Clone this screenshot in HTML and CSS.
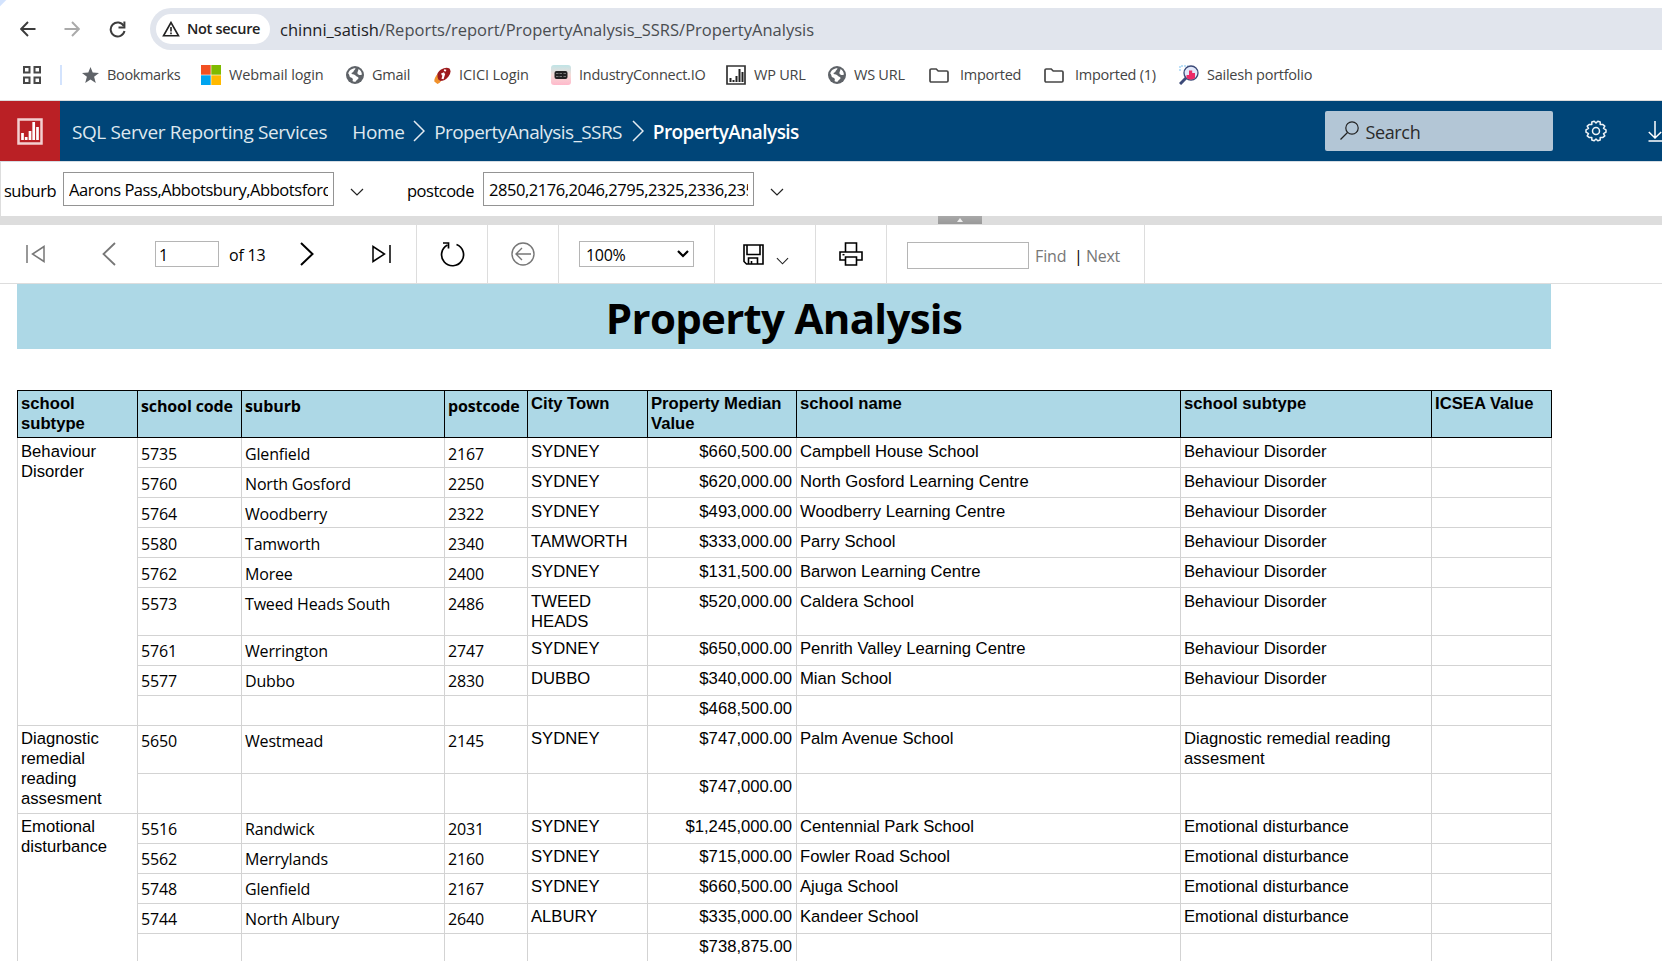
FILE: index.html
```
<!DOCTYPE html>
<html lang="en">
<head>
<meta charset="utf-8">
<title>PropertyAnalysis</title>
<link rel="stylesheet" href="styles.css">
</head>
<body>
<svg width="0" height="0" class="defs">
  <symbol id="globe" viewBox="0 0 18 18"><circle cx="9" cy="9" r="9" fill="#5f6368"/><path d="M2.200 7.500C3 4.500 5.500 2.200 9.500 2.200 9.500 4 7.500 4 7.500 5.500 7.500 6.500 5.500 6.300 5.500 7.500 5.500 8.500 8.500 8 9.500 9.500 10.300 11 12.500 10.500 12.500 12 12.500 13.500 10.500 13.500 9.500 15.800 8 16 7 15.500 6.500 15 7.500 13 6.500 12 5 11.500 3 11 4 9 2.200 7.500zM12.500 3c2 1.200 3.300 3 3.400 5.500-1.500 1-3.900.5-4.400-1C11 6 12.500 5 12.500 3z" fill="#fff"/></symbol>
  <symbol id="folder" viewBox="0 0 20 15"><path d="M1 3.500V2.200Q1 1 2.300 1h4.900l2 2h8.600Q19 3 19 4.200v8.600q0 1.200-1.200 1.200H2.200Q1 14 1 12.800z" fill="none" stroke="#474747" stroke-width="1.700"/></symbol>
  <symbol id="down" viewBox="0 0 14 8"><path d="M1 1l6 6 6-6" fill="none" stroke="#222" stroke-width="1.200"/></symbol>
  <symbol id="crumb" viewBox="0 0 12 22"><path d="M1 1l10 10L1 21" fill="none" stroke="#e4ebf1" stroke-width="1.500"/></symbol>
</svg>

<header class="browser">
  <div class="nav">
    <svg class="back" width="16" height="16" viewBox="0 0 16 16"><path d="M15.500 8H1.500M8 1L1.200 8 8 15" fill="none" stroke="#3c3c3c" stroke-width="1.900"/></svg>
    <svg class="forward" width="16" height="16" viewBox="0 0 16 16"><path d="M.5 8h14M8 1l6.800 7L8 15" fill="none" stroke="#aaa" stroke-width="1.900"/></svg>
    <svg class="reload" width="17" height="17" viewBox="0 0 17 17"><path d="M14.800 5A7 7 0 1 0 15.500 10" fill="none" stroke="#3c3c3c" stroke-width="2"/><path d="M15.400.5v6H9.500" fill="none" stroke="#3c3c3c" stroke-width="2"/></svg>
    <div class="address">
      <div class="secure"><svg width="18" height="16" viewBox="0 0 18 16"><path d="M9 1.500L1.500 14.800h15z" fill="none" stroke="#222" stroke-width="1.600"/><path d="M9 6v4.500M9 11.500v1.700" stroke="#222" stroke-width="1.600"/></svg><span>Not secure</span></div>
      <span class="url"><b>chinni_satish</b>/Reports/report/PropertyAnalysis_SSRS/PropertyAnalysis</span>
    </div>
  </div>
  <div class="bookmarks">
    <svg class="apps" width="18" height="18" viewBox="0 0 18 18"><path d="M1 1h5.500v5.500H1zM11.500 1H17v5.500h-5.500zM1 11.500h5.500V17H1zM11.500 11.500H17V17h-5.500z" fill="none" stroke="#474747" stroke-width="2"/></svg>
    <i class="divider"></i>
    <a class="m1"><svg width="17" height="16" viewBox="0 0 17 16"><path d="M8.500 0l2.200 5.500 6.300.4-4.900 3.800 1.700 6.300-5.300-3.500L3.200 16l1.700-6.300L0 5.900l6.300-.4z" fill="#5f6368"/></svg><span>Bookmarks</span></a>
    <a class="m2"><svg width="20" height="20" viewBox="0 0 20 20"><path d="M0 0h9.700v9.700H0z" fill="#f25022"/><path d="M10.300 0H20v9.700h-9.700z" fill="#7fba00"/><path d="M0 10.300h9.700V20H0z" fill="#00a4ef"/><path d="M10.300 10.300H20V20h-9.700z" fill="#ffb900"/></svg><span>Webmail login</span></a>
    <a class="m3"><svg width="18" height="18"><use href="#globe"/></svg><span>Gmail</span></a>
    <a class="m4"><svg width="17" height="18" viewBox="0 0 17 18"><path d="M3 12Q2 7 7 3.500 12 .5 15.500 2.500 18 6 14.500 10.500 11 15 6 15 3.500 14.500 3 12z" fill="#9d1b1e"/><path d="M3.500 8Q0 12 .3 15.500L3.500 18q2.500-1 3.500-2.800Q3 14.500 3.500 8z" fill="#f0912b"/><path d="M10.200 7.500L8.500 13M11.300 3.500l-.5 1.800M7.500 8.500l3-1.300" stroke="#fff" stroke-width="2.200"/></svg><span>ICICI Login</span></a>
    <a class="m5"><svg width="20" height="20" viewBox="0 0 20 20"><defs><linearGradient id="ic" x1="0" y1="0" x2="0" y2="1"><stop offset="0" stop-color="#bfe4e6"/><stop offset=".5" stop-color="#f5dcd8"/><stop offset="1" stop-color="#ffb9cb"/></linearGradient></defs><rect width="20" height="20" rx="3" fill="url(#ic)"/><rect x="3.500" y="6" width="13" height="8" rx="2" fill="#222"/><path d="M5 8.500h2.500m1 0H11m1.500 0H15M5 11.500h2.500m1 0H11m1.500 0H15" stroke="#777"/></svg><span>IndustryConnect.IO</span></a>
    <a class="m6"><svg width="20" height="20" viewBox="0 0 20 20"><path d="M1 1h18v18H1z" fill="#fff" stroke="#333" stroke-width="1.700"/><path d="M4.500 17v-4M7.500 17v-2M10.500 17v-6M13.500 17V4M16.500 17V7" stroke="#222" stroke-width="2"/></svg><span>WP URL</span></a>
    <a class="m7"><svg width="18" height="18"><use href="#globe"/></svg><span>WS URL</span></a>
    <a class="m8"><svg width="20" height="15"><use href="#folder"/></svg><span>Imported</span></a>
    <a class="m9"><svg width="20" height="15"><use href="#folder"/></svg><span>Imported (1)</span></a>
    <a class="m10"><svg width="20" height="20" viewBox="0 0 20 20"><path d="M1 6V1h8" fill="none" stroke="#a6d5f5" stroke-width="1.500" stroke-dasharray="2 1"/><circle cx="12" cy="8" r="7" fill="#e2e8fa" stroke="#3c4a78" stroke-width="1.300"/><path d="M7.500 13v-3H10V5.500h3.200V8H16v5q-4 3-8.500 0z" fill="#ed2a67"/><path d="M1 19l6-6" stroke="#3c4a78" stroke-width="3"/></svg><span>Sailesh portfolio</span></a>
  </div>
</header>

<div class="brand">
  <div class="logo"><svg width="26" height="27" viewBox="0 0 26 27"><path d="M1.500 1.500h23v24h-23z" fill="none" stroke="#f3cfd0" stroke-width="2.500"/><path d="M5.500 22v-7M9.200 22v-3M13 22v-9M16.700 22V4M20.500 22V9" stroke="#fff" stroke-width="2.700"/></svg></div>
  <span class="product">SQL Server Reporting Services</span>
  <span class="home">Home</span>
  <svg width="12" height="22"><use href="#crumb"/></svg>
  <span class="folder">PropertyAnalysis_SSRS</span>
  <svg width="12" height="22"><use href="#crumb"/></svg>
  <span class="current">PropertyAnalysis</span>
  <div class="search"><svg width="19" height="19" viewBox="0 0 19 19"><circle cx="12" cy="7" r="6.200" fill="none" stroke="#222" stroke-width="1.200"/><path d="M7.500 11.500L.5 18.500" stroke="#222" stroke-width="1.300"/></svg><span>Search</span></div>
  <svg class="gear" width="22" height="22" viewBox="-11 -11 22 22"><path d="M-1.800-9.800L0-8 1.800-9.800 4.200-9 4.200-6.500 6.600-6.600 8.800-4.800 7.500-2.600 10-1.200V1.200L7.500 2.600 8.800 4.800 6.600 6.600 4.200 6.500 4.200 9 1.800 9.800 0 8-1.800 9.800-4.200 9-4.200 6.500-6.600 6.600-8.800 4.800-7.500 2.600-10 1.200V-1.200L-7.500-2.600-8.800-4.800-6.600-6.600-4.200-6.500-4.200-9z" fill="none" stroke="#eef3f7" stroke-width="1.500" stroke-linejoin="round"/><circle r="3.500" fill="none" stroke="#eef3f7" stroke-width="1.500"/></svg>
  <svg class="download" width="14" height="21" viewBox="0 0 14 21"><path d="M7 0v17M.8 11L7 17l6.200-6M.5 20H14" fill="none" stroke="#fff" stroke-width="1.500"/></svg>
</div>

<div class="params">
  <label class="plabel">suburb</label><div class="pbox"><span>Aarons Pass,Abbotsbury,Abbotsford</span></div>
  <svg class="drop" width="14" height="8"><use href="#down"/></svg>
  <label class="plabel second">postcode</label><div class="pbox"><span>2850,2176,2046,2795,2325,2336,2358</span></div>
  <svg class="drop" width="14" height="8"><use href="#down"/></svg>
</div>
<div class="splitter"><div class="grip"><i></i></div></div>

<div class="toolbar">
  <div class="group pages">
    <svg class="first" width="19" height="18" viewBox="0 0 19 18"><path d="M1 0v18M18 1.500v15L6.500 9z" fill="none" stroke="#777" stroke-width="1.500"/></svg>
    <svg class="prev" width="14" height="24" viewBox="0 0 14 24"><path d="M13 1L1.500 12 13 23" fill="none" stroke="#777" stroke-width="1.800"/></svg>
    <div class="pagebox">1</div><span class="of">of 13</span>
    <svg class="next" width="14" height="24" viewBox="0 0 14 24"><path d="M1 1l11.500 11L1 23" fill="none" stroke="#000" stroke-width="2"/></svg>
    <svg class="last" width="19" height="18" viewBox="0 0 19 18"><path d="M18 0v18M1 1.500v15L12.500 9z" fill="none" stroke="#000" stroke-width="1.500"/></svg>
  </div>
  <div class="group refresh"><svg width="25" height="26" viewBox="0 0 25 26"><path d="M7.500 4A11 11 0 1 0 16.500 3.500" fill="none" stroke="#000" stroke-width="1.700"/><path d="M3 2h5.500v5.500" fill="none" stroke="#000" stroke-width="1.700"/></svg></div>
  <div class="group goback"><svg width="24" height="24" viewBox="0 0 24 24"><circle cx="12" cy="12" r="11" fill="none" stroke="#777" stroke-width="1.400"/><path d="M20 12H5M11 6l-6 6 6 6" fill="none" stroke="#777" stroke-width="1.400"/></svg></div>
  <div class="group zoom"><div class="select"><span>100%</span><svg width="12" height="8" viewBox="0 0 12 8"><path d="M1 1l5 5 5-5" fill="none" stroke="#000" stroke-width="2.200"/></svg></div></div>
  <div class="group save"><svg width="21" height="21" viewBox="0 0 21 21"><path d="M1 1h19v19H3.500L1 17.500zM4 1v9.500h13V1M5.500 20v-6h9v6M8.500 20v-3" fill="none" stroke="#000" stroke-width="1.600"/></svg><svg class="caret" width="13" height="8"><use href="#down"/></svg></div>
  <div class="group print"><svg width="24" height="24" viewBox="0 0 24 24"><path d="M6.500 10V1h11v9M6.500 18H1v-8h22v8h-5.500M6.500 15h11v8h-11z" fill="none" stroke="#000" stroke-width="1.600"/><path d="M3.500 12.700h2" stroke="#000" stroke-width="1.500"/></svg></div>
  <div class="group find"><div class="findbox"></div><span class="ftext">Find</span><span class="pipe">|</span><span class="ntext">Next</span></div>
</div>

<main class="report">
  <h1>Property Analysis</h1>
  <table>
    <colgroup><col class="c1"><col class="c2"><col class="c3"><col class="c4"><col class="c5"><col class="c6"><col class="c7"><col class="c8"><col class="c9"></colgroup>
    <tr class="head"><th>school subtype</th><th class="s">school code</th><th class="s">suburb</th><th class="s">postcode</th><th>City Town</th><th>Property Median Value</th><th>school name</th><th>school subtype</th><th>ICSEA Value</th></tr>
    <tr><td rowspan="9">Behaviour Disorder</td><td class="s">5735</td><td class="s">Glenfield</td><td class="s">2167</td><td>SYDNEY</td><td class="n">$660,500.00</td><td>Campbell House School</td><td>Behaviour Disorder</td><td></td></tr>
    <tr><td class="s">5760</td><td class="s">North Gosford</td><td class="s">2250</td><td>SYDNEY</td><td class="n">$620,000.00</td><td>North Gosford Learning Centre</td><td>Behaviour Disorder</td><td></td></tr>
    <tr><td class="s">5764</td><td class="s">Woodberry</td><td class="s">2322</td><td>SYDNEY</td><td class="n">$493,000.00</td><td>Woodberry Learning Centre</td><td>Behaviour Disorder</td><td></td></tr>
    <tr><td class="s">5580</td><td class="s">Tamworth</td><td class="s">2340</td><td>TAMWORTH</td><td class="n">$333,000.00</td><td>Parry School</td><td>Behaviour Disorder</td><td></td></tr>
    <tr><td class="s">5762</td><td class="s">Moree</td><td class="s">2400</td><td>SYDNEY</td><td class="n">$131,500.00</td><td>Barwon Learning Centre</td><td>Behaviour Disorder</td><td></td></tr>
    <tr class="tall"><td class="s">5573</td><td class="s">Tweed Heads South</td><td class="s">2486</td><td>TWEED HEADS</td><td class="n">$520,000.00</td><td>Caldera School</td><td>Behaviour Disorder</td><td></td></tr>
    <tr><td class="s">5761</td><td class="s">Werrington</td><td class="s">2747</td><td>SYDNEY</td><td class="n">$650,000.00</td><td>Penrith Valley Learning Centre</td><td>Behaviour Disorder</td><td></td></tr>
    <tr><td class="s">5577</td><td class="s">Dubbo</td><td class="s">2830</td><td>DUBBO</td><td class="n">$340,000.00</td><td>Mian School</td><td>Behaviour Disorder</td><td></td></tr>
    <tr><td></td><td></td><td></td><td></td><td class="n">$468,500.00</td><td></td><td></td><td></td></tr>
    <tr class="tall"><td rowspan="2">Diagnostic remedial reading assesment</td><td class="s">5650</td><td class="s">Westmead</td><td class="s">2145</td><td>SYDNEY</td><td class="n">$747,000.00</td><td>Palm Avenue School</td><td>Diagnostic remedial reading assesment</td><td></td></tr>
    <tr class="mid"><td></td><td></td><td></td><td></td><td class="n">$747,000.00</td><td></td><td></td><td></td></tr>
    <tr><td rowspan="5">Emotional disturbance</td><td class="s">5516</td><td class="s">Randwick</td><td class="s">2031</td><td>SYDNEY</td><td class="n">$1,245,000.00</td><td>Centennial Park School</td><td>Emotional disturbance</td><td></td></tr>
    <tr><td class="s">5562</td><td class="s">Merrylands</td><td class="s">2160</td><td>SYDNEY</td><td class="n">$715,000.00</td><td>Fowler Road School</td><td>Emotional disturbance</td><td></td></tr>
    <tr><td class="s">5748</td><td class="s">Glenfield</td><td class="s">2167</td><td>SYDNEY</td><td class="n">$660,500.00</td><td>Ajuga School</td><td>Emotional disturbance</td><td></td></tr>
    <tr><td class="s">5744</td><td class="s">North Albury</td><td class="s">2640</td><td>ALBURY</td><td class="n">$335,000.00</td><td>Kandeer School</td><td>Emotional disturbance</td><td></td></tr>
    <tr><td></td><td></td><td></td><td></td><td class="n">$738,875.00</td><td></td><td></td><td></td></tr>
  </table>
</main>
</body>
</html>
```
FILE: styles.css
```
* { box-sizing: border-box; }
body { margin: 0; height: 961px; overflow: hidden; background: #fff; color: #000; font-family: "Open Sans", "Noto Sans", sans-serif; font-size: 16px; white-space: nowrap; }
svg { flex: none; display: block; }
.defs { display: none; }
.browser { height: 101px; border-bottom: 1px solid #dcdcdc; background: linear-gradient(135deg, #d3e3fd 4px, #fff 5px); }

/* navigation row */
.nav { display: flex; align-items: center; height: 58px; padding-left: 20px; }
.nav .forward { margin-left: 28px; }
.nav .reload { margin-left: 29px; }
.address { display: flex; align-items: center; flex: 1; height: 42px; margin-left: 24px; padding-left: 6px; background: #e1e5ed; border-radius: 21px 0 0 21px; }
.secure { display: flex; align-items: center; gap: 7px; width: 114px; height: 30px; padding: 0 0 1px 6px; background: #fff; border-radius: 15px; font-size: 14.5px; font-weight: 600; letter-spacing: -.3px; color: #222; }
.url { margin-left: 10px; font-size: 16.5px; letter-spacing: 0; color: #4a4d51; }
.url b { font-weight: 400; color: #202124; }

/* bookmarks row */
.bookmarks { display: flex; align-items: center; height: 34px; padding-left: 23px; font-size: 14.5px; letter-spacing: -.25px; color: #444; }
.divider { width: 2px; height: 20px; margin-left: 19px; background: #d3e3fd; }
.bookmarks a { display: flex; align-items: center; gap: 8px; }
.bookmarks span { padding-bottom: 2px; }
.m1 { width: 119px; margin-left: 20px; }
.m1 span { letter-spacing: -.35px; }
.m2 { width: 145px; }
.m3 { width: 88px; }
.m4 { width: 117px; }
.m5 { width: 175px; }
.m6 { width: 102px; }
.m7 { width: 101px; }
.m8 { width: 115px; }
.m9 { width: 135px; }
.m8 span, .m9 span { margin-left: 3px; }
.m2 span, .m4 span { letter-spacing: -.1px; }

/* portal header */
.brand { display: flex; align-items: center; height: 61px; border-bottom: 1px solid #d6dde4; background: #004578; color: #dfe8ef; font-size: 19px; letter-spacing: -.35px; }
.logo { display: flex; align-items: center; justify-content: center; width: 60px; height: 60px; background: #ba2025; }
.brand > span { padding-top: 2px; }
.product { width: 280px; margin-left: 12px; }
.home { width: 61px; margin-left: 1px; }
.folder { width: 198px; margin-left: 9px; letter-spacing: -.57px; }
.current { width: 674px; margin-left: 9px; font-weight: 600; letter-spacing: -.57px; color: #fff; }
.search { display: flex; align-items: center; gap: 6px; width: 228px; height: 40px; padding: 2px 0 0 15px; background: #b3c6d6; border-radius: 2px; color: #2b2b2b; font-size: 18px; }
.search svg { margin-top: -3px; }
.gear { margin-left: 32px; }
.download { margin-left: 41px; }

/* parameters */
.params { display: flex; align-items: center; height: 54px; border-left: 1px solid #ddd; padding: 0 0 0 3px; font-size: 16.5px; letter-spacing: -.25px; }
.plabel { width: 59px; padding-top: 3px; letter-spacing: -.5px; }
.plabel.second { width: 76px; margin-left: 43px; }
.pbox { width: 271px; height: 34px; margin-right: 16px; padding: 0 5px; border: 1px solid #949494; line-height: 33px; letter-spacing: -.45px; }
.pbox span { display: block; overflow: hidden; }
.drop { margin-top: 5px; }
.splitter { height: 9px; padding-left: 938px; background: #ddd; }
.grip { display: flex; justify-content: center; align-items: center; width: 44px; height: 8px; background: linear-gradient(#a9a9a9, #999); }
.grip i { border: 3px solid transparent; border-top: 0; border-bottom: 4px solid #eee; }

/* viewer toolbar */
.toolbar { display: flex; height: 59px; border-bottom: 1px solid #ddd; }
.group { display: flex; align-items: center; border-right: 1px solid #ddd; }
.pages { width: 417px; padding-left: 26px; }
.prev { margin-left: 57px; }
.pagebox { width: 64px; height: 26px; margin-left: 39px; padding-left: 3px; border: 1px solid #b5b5b5; line-height: 26px; }
.of { width: 71px; padding: 2px 0 0 10px; letter-spacing: -.2px; }
.next { margin-left: 10px; }
.last { margin-left: 58px; }
.refresh, .goback { width: 71px; justify-content: center; }
.zoom { width: 156px; padding-left: 20px; }
.select { display: flex; align-items: center; justify-content: space-between; width: 115px; height: 26px; padding: 0 4px 0 6px; border: 1px solid #b5b5b5; letter-spacing: -.3px; }
.select span { padding-top: 2px; }
.save { width: 101px; padding-left: 28px; gap: 12px; }
.caret { margin-top: 13px; }
.print { width: 71px; justify-content: center; }
.find { width: 258px; padding: 2px 0 0 20px; color: #777; }
.find span { padding-top: 2px; }
.findbox { width: 122px; height: 27px; border: 1px solid #b5b5b5; }
.ftext { width: 39px; margin-left: 6px; letter-spacing: -.1px; }
.pipe { width: 12px; color: #000; }
.ntext { letter-spacing: -.3px; }

/* report body */
.report { padding-left: 17px; }
h1 { width: 1534px; height: 65px; margin: 0 0 41px; background: #add8e6; text-align: center; font-size: 42px; font-weight: 700; line-height: 68px; letter-spacing: -.7px; }
table { width: 1535px; table-layout: fixed; border-collapse: collapse; white-space: normal; font-family: "Liberation Sans", Arial, sans-serif; font-size: 16.67px; line-height: 20px; }
.c1, .c5 { width: 120px; }
.c2 { width: 104px; }
.c3 { width: 203px; }
.c4 { width: 83px; }
.c6 { width: 149px; }
.c7 { width: 384px; }
.c8 { width: 251px; }
.c9 { width: 120px; }
tr { height: 30px; }
.tall { height: 48px; }
.mid { height: 40px; }
.head { height: 47px; }
td, th { padding: 3px 3px 0; border: 1px solid #d3d3d3; text-align: left; vertical-align: top; }
th { background: #add8e6; border-color: #000; }
.s { padding-top: 5px; font-family: "Open Sans", "Noto Sans", sans-serif; font-size: 16px; letter-spacing: -.17px; }
th.s { letter-spacing: -.12px; white-space: nowrap; }
tr:nth-child(-n+7) td { padding-top: 4px; }
tr:nth-child(-n+7) td.s { padding-top: 6px; }
.n { padding-right: 4px; text-align: right; }
```
